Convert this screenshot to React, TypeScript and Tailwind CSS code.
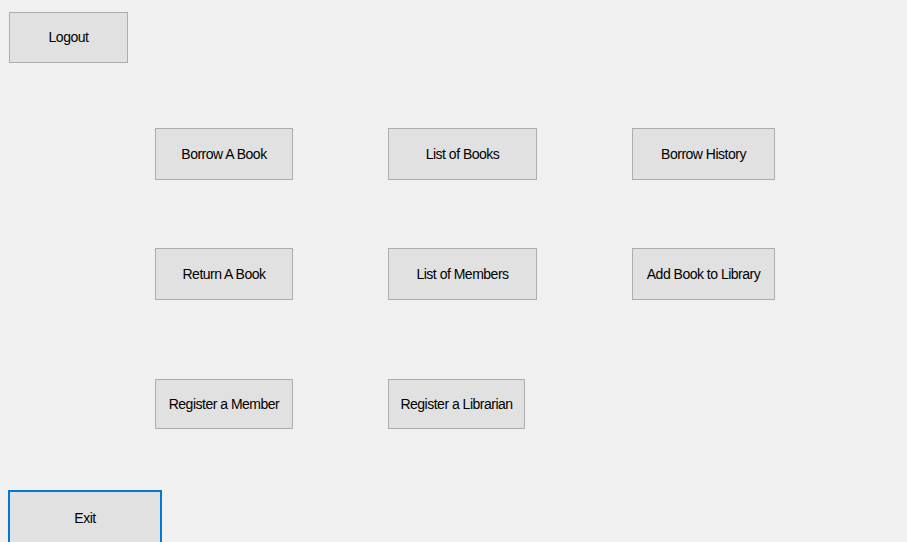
const font = { fontFamily: '"Liberation Sans", Arial, sans-serif' };

type BtnProps = { label: string; className: string };

function WinButton({ label, className }: BtnProps) {
  return (
    <button
      type="button"
      className={`flex shrink-0 items-center justify-center bg-[#e1e1e1] text-[14px] tracking-[-0.5px] text-black ${className}`}
    >
      {label}
    </button>
  );
}

export default function App() {
  return (
    <div
      style={font}
      className="flex h-[542px] w-[907px] flex-col overflow-hidden bg-[#f0f0f0]"
    >
      <WinButton
        label="Logout"
        className="ml-[9px] mt-[12px] h-[51px] w-[119px] border border-[#adadad]"
      />

      <div className="mt-[65px] flex shrink-0 pl-[155px]">
        <WinButton label="Borrow A Book" className="h-[52px] w-[138px] border border-[#adadad]" />
        <WinButton label="List of Books" className="ml-[95px] h-[52px] w-[149px] border border-[#adadad]" />
        <WinButton label="Borrow History" className="ml-[95px] h-[52px] w-[143px] border border-[#adadad]" />
      </div>

      <div className="mt-[68px] flex shrink-0 pl-[155px]">
        <WinButton label="Return A Book" className="h-[52px] w-[138px] border border-[#adadad]" />
        <WinButton label="List of Members" className="ml-[95px] h-[52px] w-[149px] border border-[#adadad]" />
        <WinButton label="Add Book to Library" className="ml-[95px] h-[52px] w-[143px] border border-[#adadad]" />
      </div>

      <div className="mt-[79px] flex shrink-0 pl-[155px]">
        <WinButton label="Register a Member" className="h-[50px] w-[138px] border border-[#adadad]" />
        <WinButton label="Register a Librarian" className="ml-[95px] h-[50px] w-[137px] border border-[#adadad]" />
      </div>

      <WinButton
        label="Exit"
        className="ml-[8px] mt-[61px] h-[56px] w-[154px] border-2 border-[#0078d7]"
      />
    </div>
  );
}
